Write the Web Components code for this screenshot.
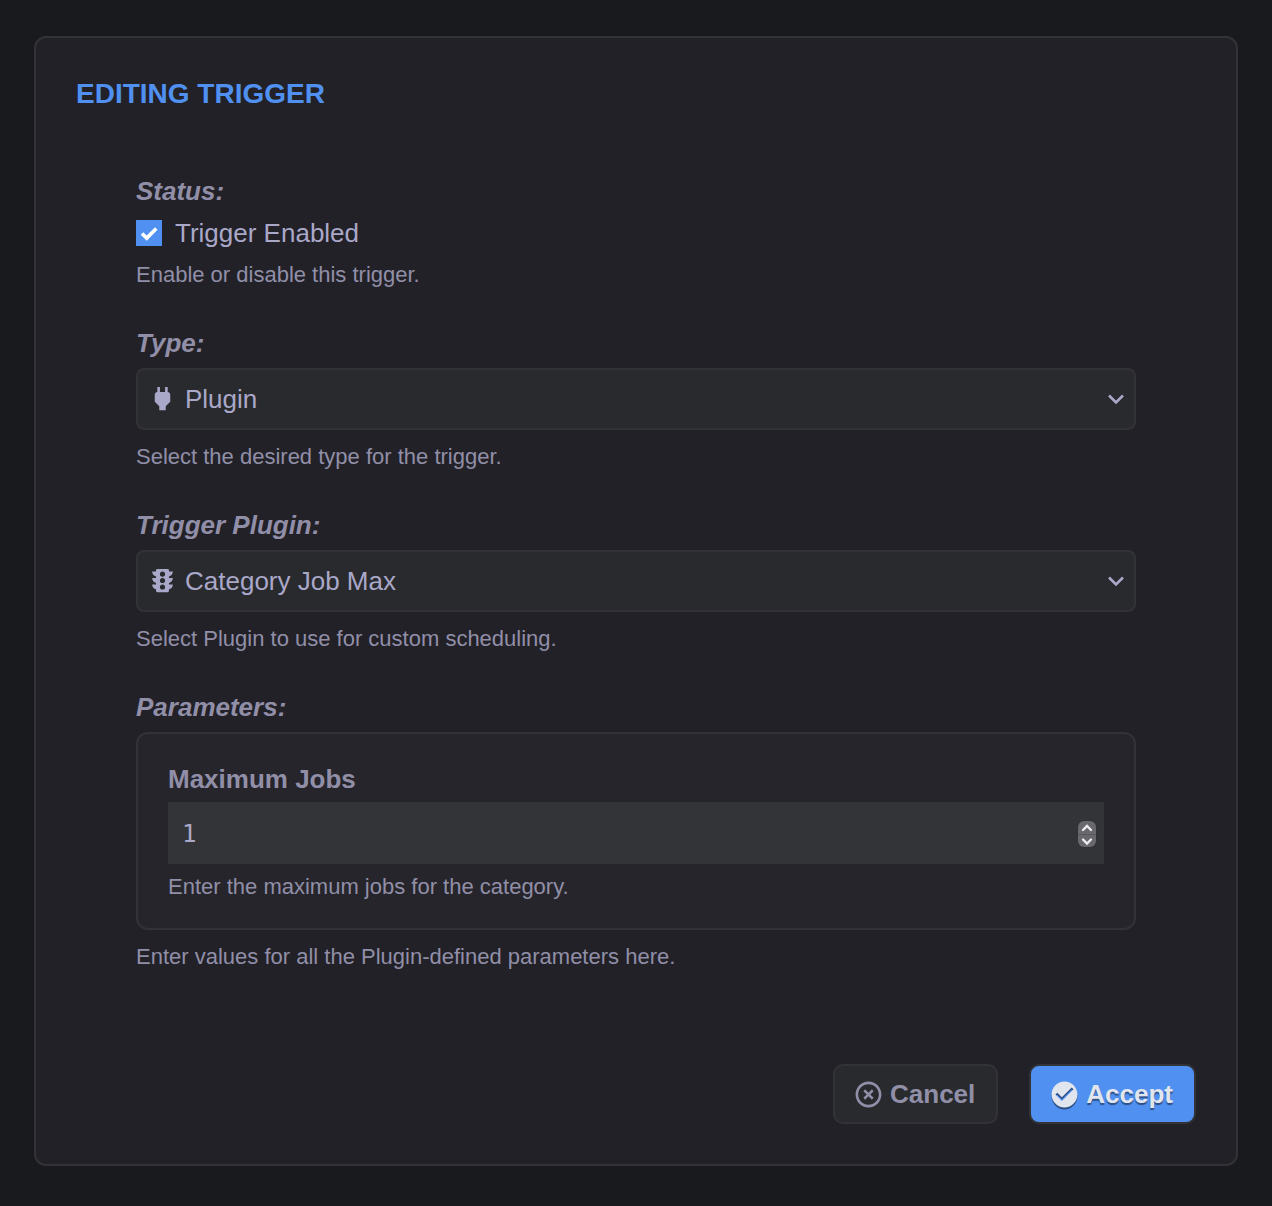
<!DOCTYPE html>
<html lang="en">
<head>
<meta charset="utf-8">
<title>Editing Trigger</title>
<style>
:root {
  --page: #191a1e; --panel: #222127; --group: #26252b; --field: #292a2e; --input: #333438;
  --line: #323237; --text: #aaa8c9; --label: #918fa8; --accent: #5090f0;
}
body { margin: 0; background: var(--page); color: var(--text); font: 26px/32px "Liberation Sans", Arial, sans-serif; }
</style>
</head>
<body>
<dialog-card heading="Editing Trigger">
  <check-field label="Status:" text="Trigger Enabled" hint="Enable or disable this trigger."></check-field>
  <select-field label="Type:" value="Plugin" icon="plug" hint="Select the desired type for the trigger."></select-field>
  <select-field label="Trigger Plugin:" value="Category Job Max" icon="traffic" hint="Select Plugin to use for custom scheduling."></select-field>
  <param-group label="Parameters:" hint="Enter values for all the Plugin-defined parameters here.">
    <number-field label="Maximum Jobs" value="1" hint="Enter the maximum jobs for the category."></number-field>
  </param-group>
  <action-button slot="actions" icon="cancel">Cancel</action-button>
  <action-button slot="actions" icon="accept" primary>Accept</action-button>
</dialog-card>

<script>
const ICONS = {
  plug: 'M16,7V3H14V7H10V3H8V7C7,7 6,8 6,9V14.5L9.5,18V21H14.5V18L18,14.5V9C18,8 17,7 16,7Z',
  traffic: 'M12,9A2,2 0 0,1 10,7C10,5.89 10.9,5 12,5C13.11,5 14,5.89 14,7A2,2 0 0,1 12,9M12,14A2,2 0 0,1 10,12C10,10.89 10.9,10 12,10C13.11,10 14,10.89 14,12A2,2 0 0,1 12,14M12,19A2,2 0 0,1 10,17C10,15.89 10.9,15 12,15C13.11,15 14,15.89 14,17A2,2 0 0,1 12,19M20,10H17V8.86C18.72,8.41 20,6.86 20,5H17V4A1,1 0 0,0 16,3H8A1,1 0 0,0 7,4V5H4C4,6.86 5.28,8.41 7,8.86V10H4C4,11.86 5.28,13.41 7,13.86V15H4C4,16.86 5.28,18.41 7,18.86V20A1,1 0 0,0 8,21H16A1,1 0 0,0 17,20V18.86C18.72,18.41 20,16.86 20,15H17V13.86C18.72,13.41 20,11.86 20,10Z',
  cancel: 'M12,20C7.59,20 4,16.41 4,12C4,7.59 7.59,4 12,4C16.41,4 20,7.59 20,12C20,16.41 16.41,20 12,20M12,2C6.47,2 2,6.47 2,12C2,17.53 6.47,22 12,22C17.53,22 22,17.53 22,12C22,6.47 17.53,2 12,2M14.59,8L12,10.59L9.41,8L8,9.41L10.59,12L8,14.59L9.41,16L12,13.41L14.59,16L16,14.59L13.41,12L16,9.41L14.59,8Z',
  accept: 'M12 2C6.5 2 2 6.5 2 12S6.5 22 12 22 22 17.5 22 12 17.5 2 12 2M10 17L5 12L6.41 10.59L10 14.17L17.59 6.58L19 8L10 17Z'
};
const icon = name => `<svg class="icon" viewBox="0 0 24 24" aria-hidden="true"><path fill="currentColor" d="${ICONS[name]}"/></svg>`;

const SHARED = `
  :host { display: block; }
  * { box-sizing: border-box; }
  .label { display: block; margin-bottom: 10px; color: var(--label); font-weight: bold; font-style: italic; line-height: 30px; }
  .hint { margin: 12px 0 0; color: var(--label); font-size: 22px; line-height: 30px; }
  .icon { display: block; width: 31px; height: 31px; flex: none; }
`;

class Base extends HTMLElement {
  connectedCallback() {
    if (this.shadowRoot) return;
    this.attachShadow({ mode: 'open' }).innerHTML = `<style>${SHARED}${this.css()}</style>${this.html()}`;
    this.ready();
  }
  a(name) { return this.getAttribute(name) || ''; }
  ready() {}
}

customElements.define('dialog-card', class extends Base {
  css() { return `
    :host { margin: 36px 34px 40px; padding: 40px; border: 2px solid var(--line); border-radius: 12px; background: var(--panel); box-sizing: border-box; }
    h1 { margin: 0 0 66px; font-size: 28px; line-height: 32px; text-transform: uppercase; color: var(--accent); }
    .fields { display: flex; flex-direction: column; gap: 38px; padding: 0 60px; }
    footer { display: flex; justify-content: flex-end; gap: 31px; margin-top: 92px; }`; }
  html() { return `<h1>${this.a('heading')}</h1><div class="fields"><slot></slot></div><footer><slot name="actions"></slot></footer>`; }
});

customElements.define('check-field', class extends Base {
  css() { return `
    .row { display: flex; align-items: center; gap: 13px; height: 34px; }
    .hint { margin-top: 10px; }
    .box { display: grid; width: 26px; height: 26px; }
    .box > * { grid-area: 1 / 1; width: 26px; height: 26px; margin: 0; }
    input { appearance: none; background: var(--input); }
    input:checked { background: var(--accent); }
    svg { visibility: hidden; pointer-events: none; }
    input:checked + svg { visibility: visible; }`; }
  html() { return `<span class="label">${this.a('label')}</span>
    <div class="row"><span class="box"><input id="c" type="checkbox" checked>
    <svg viewBox="0 0 26 26"><path d="M6 13.5l4.7 4.6L20.3 8.5" fill="none" stroke="#fff" stroke-width="3.6"/></svg></span>
    <label for="c">${this.a('text')}</label></div>
    <p class="hint">${this.a('hint')}</p>`; }
});

customElements.define('select-field', class extends Base {
  css() { return `
    .control { display: grid; grid-template-columns: 47px 1fr 40px; align-items: center; }
    select { grid-area: 1 / 1 / 2 / 4; width: 100%; height: 62px; padding: 0 47px; appearance: none; border: 2px solid var(--line);
      border-radius: 8px; background: var(--field); color: inherit; font: inherit; }
    .icon { grid-area: 1 / 1; margin: 0 0 2px 11px; pointer-events: none; }
    .chevron { grid-area: 1 / 3; justify-self: center; width: 18px; height: 12px; pointer-events: none; }`; }
  html() { return `<label class="label" for="s">${this.a('label')}</label>
    <div class="control"><select id="s"><option>${this.a('value')}</option></select>${icon(this.a('icon'))}
    <svg class="chevron" viewBox="0 0 18 12"><path d="M2 2.5l7 7 7-7" fill="none" stroke="currentColor" stroke-width="2.6"/></svg></div>
    <p class="hint">${this.a('hint')}</p>`; }
});

customElements.define('param-group', class extends Base {
  css() { return `.group { padding: 30px 30px 26px; border: 2px solid var(--line); border-radius: 12px; background: var(--group); }`; }
  html() { return `<span class="label" id="g">${this.a('label')}</span>
    <div class="group" role="group" aria-labelledby="g"><slot></slot></div>
    <p class="hint">${this.a('hint')}</p>`; }
});

customElements.define('number-field', class extends Base {
  css() { return `
    .label { margin-bottom: 8px; font-style: normal; }
    .hint { margin-top: 8px; }
    .control { display: grid; grid-template-columns: 1fr 26px; align-items: center; }
    input { grid-area: 1 / 1 / 2 / 3; width: 100%; height: 62px; padding: 2px 34px 0 14px; border: 0; border-radius: 0; appearance: textfield;
      background: var(--input); color: inherit; font: 24px "DejaVu Sans Mono", monospace; }
    input::-webkit-inner-spin-button { appearance: none; margin: 0; }
    .spin { grid-area: 1 / 2; width: 18px; height: 26px; margin-top: 2px; border-radius: 6px; overflow: hidden; background: #68686d; box-shadow: 0 0 1px #29292d; }
    button { display: block; width: 18px; height: 13px; padding: 0; border: 0; background: none; color: #ececee; }
    button + button { border-top: 1px solid #57575c; }
    button svg { display: block; width: 18px; height: 12px; }`; }
  html() { return `<label class="label" for="n">${this.a('label')}</label>
    <div class="control"><input id="n" type="number" value="${this.a('value')}">
    <div class="spin"><button type="button" aria-label="Increase"><svg viewBox="0 0 18 12"><path d="M5 8l4-4 4 4" fill="none" stroke="currentColor" stroke-width="2.4" stroke-linecap="round"/></svg></button>
    <button type="button" aria-label="Decrease"><svg viewBox="0 0 18 12"><path d="M5 4.5l4 4 4-4" fill="none" stroke="currentColor" stroke-width="2.4" stroke-linecap="round"/></svg></button></div></div>
    <p class="hint">${this.a('hint')}</p>`; }
  ready() {
    const input = this.shadowRoot.querySelector('input');
    const [up, down] = this.shadowRoot.querySelectorAll('button');
    up.onclick = () => input.stepUp();
    down.onclick = () => input.stepDown();
  }
});

customElements.define('action-button', class extends Base {
  css() { return `
    button { display: flex; align-items: center; gap: 6px; height: 60px; padding: 0 21px 0 18px; border: 2px solid var(--line);
      border-radius: 10px; background: var(--field); color: var(--label); font: inherit; font-weight: bold; }
    :host([primary]) button { background: var(--accent); color: #e1e6ee; text-shadow: 0 2px 1px #2d4f85; }
    :host([primary]) .icon { filter: drop-shadow(0 2px 0 #2d4f85); }`; }
  html() { return `<button type="button">${icon(this.a('icon'))}<span><slot></slot></span></button>`; }
});
</script>
</body>
</html>
